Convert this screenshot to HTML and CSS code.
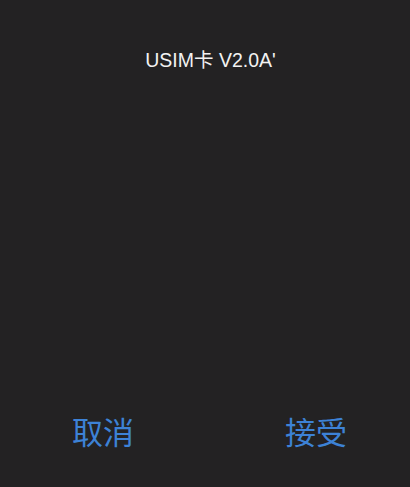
FILE: index.html
```html
<!DOCTYPE html>
<html lang="zh">
<head>
  <meta charset="UTF-8">
  <title>USIM卡</title>
  <link rel="stylesheet" href="styles.css">
</head>
<body>
  <div class="dialog">
    <h2 class="title">USIM卡 V2.0A'</h2>
    <div class="content"></div>
    <div class="actions">
      <button class="btn">取消</button>
      <button class="btn">接受</button>
    </div>
  </div>
</body>
</html>
```

FILE: styles.css
```css
html, body {
  margin: 0;
  height: 100%;
}
body {
  background: #232223;
  font-family: "Liberation Sans", "Noto Sans CJK SC", sans-serif;
}
.dialog {
  height: 487px;
  display: flex;
  flex-direction: column;
}
.title {
  margin: 0;
  padding-top: 44px;
  padding-left: 11px;
  text-align: center;
  color: #f2f2f2;
  font-size: 19.5px;
  font-weight: normal;
}
.content {
  flex: 1;
}
.actions {
  display: flex;
  justify-content: space-between;
  padding: 0 63px 34px 72px;
}
.btn {
  background: none;
  border: none;
  padding: 0;
  color: #3d82d6;
  font-family: "Noto Sans CJK SC", sans-serif;
  font-size: 31px;
  cursor: pointer;
}
```
